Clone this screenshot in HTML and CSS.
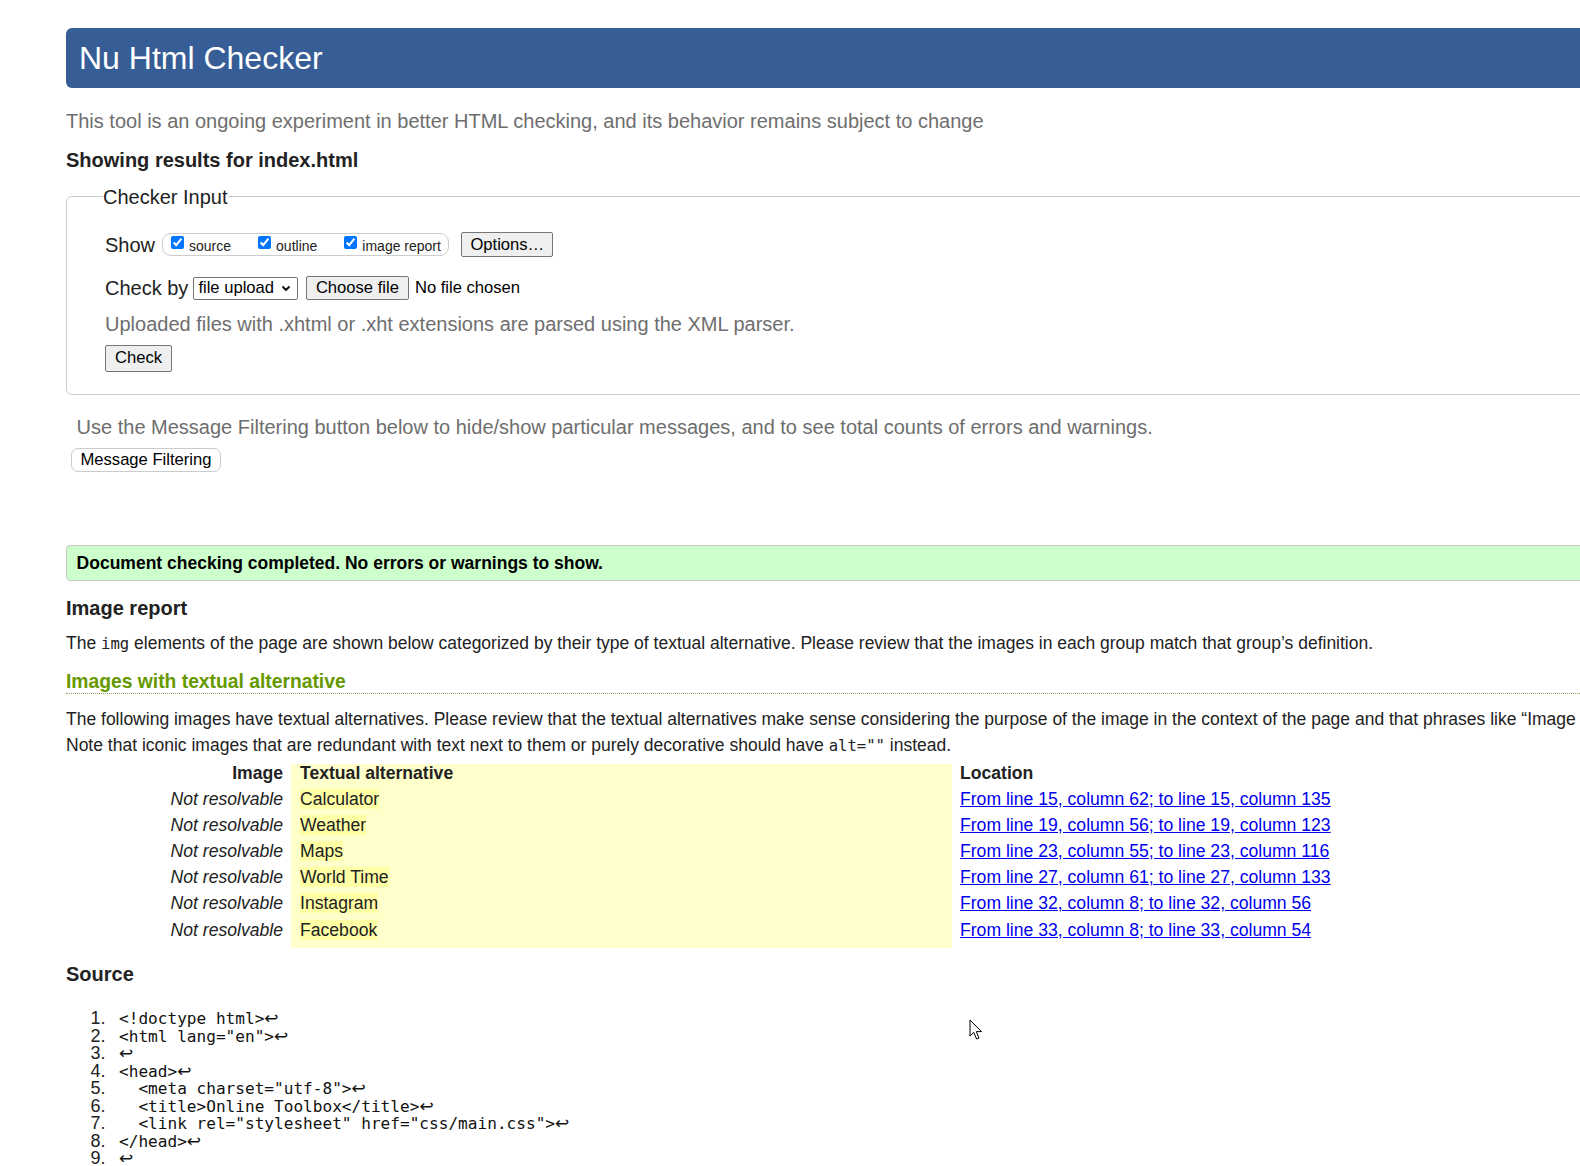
FILE: index.html
```html
<!DOCTYPE html>
<html lang="en">
<head>
<meta charset="utf-8">
<title>Nu Html Checker</title>
<link rel="stylesheet" href="styles.css">
</head>
<body>
<div class="page">
  <h1 class="banner">Nu Html Checker</h1>
  <p class="intro">This tool is an ongoing experiment in better HTML checking, and its behavior remains subject to change</p>
  <h2 class="results">Showing results for index.html</h2>
  <fieldset class="input">
    <legend>Checker Input</legend>
    <div class="row show-row">
      <span class="label">Show</span>
      <span class="opts">
        <label class="opt"><input type="checkbox" checked>source</label>
        <label class="opt"><input type="checkbox" checked>outline</label>
        <label class="opt"><input type="checkbox" checked>image report</label>
      </span>
      <button class="btn options">Options…</button>
    </div>
    <div class="row by-row">
      <span class="label">Check by</span>
      <span class="select">file upload<svg class="chev" width="10" height="7" viewBox="0 0 10 7"><path d="M1.5 1.5 L5 5 L8.5 1.5" fill="none" stroke="#000" stroke-width="1.8"/></svg></span>
      <button class="btn choose">Choose file</button>
      <span class="nofile">No file chosen</span>
    </div>
    <p class="note">Uploaded files with .xhtml or .xht extensions are parsed using the XML parser.</p>
    <button class="btn check">Check</button>
  </fieldset>
  <p class="filter-note">Use the Message Filtering button below to hide/show particular messages, and to see total counts of errors and warnings.</p>
  <button class="filter-btn">Message Filtering</button>
  <div class="success">Document checking completed. No errors or warnings to show.</div>
  <h2 class="section">Image report</h2>
  <p class="text">The <code>img</code> elements of the page are shown below categorized by their type of textual alternative. Please review that the images in each group match that group’s definition.</p>
  <h3 class="green">Images with textual alternative</h3>
  <p class="text two">The following images have textual alternatives. Please review that the textual alternatives make sense considering the purpose of the image in the context of the page and that phrases like “Image of” are not used.<br>Note that iconic images that are redundant with text next to them or purely decorative should have <code>alt=""</code> instead.</p>
  <table class="imgs">
    <thead>
      <tr><th class="c1">Image</th><th class="c2">Textual alternative</th><th class="c3">Location</th></tr>
    </thead>
    <tbody>
      <tr><td class="c1">Not resolvable</td><td class="c2"><span class="alt">Calculator</span></td><td class="c3"><a href="#">From line 15, column 62; to line 15, column 135</a></td></tr>
      <tr><td class="c1">Not resolvable</td><td class="c2"><span class="alt">Weather</span></td><td class="c3"><a href="#">From line 19, column 56; to line 19, column 123</a></td></tr>
      <tr><td class="c1">Not resolvable</td><td class="c2"><span class="alt">Maps</span></td><td class="c3"><a href="#">From line 23, column 55; to line 23, column 116</a></td></tr>
      <tr><td class="c1">Not resolvable</td><td class="c2"><span class="alt">World Time</span></td><td class="c3"><a href="#">From line 27, column 61; to line 27, column 133</a></td></tr>
      <tr><td class="c1">Not resolvable</td><td class="c2"><span class="alt">Instagram</span></td><td class="c3"><a href="#">From line 32, column 8; to line 32, column 56</a></td></tr>
      <tr class="last"><td class="c1">Not resolvable</td><td class="c2"><span class="alt">Facebook</span></td><td class="c3"><a href="#">From line 33, column 8; to line 33, column 54</a></td></tr>
    </tbody>
  </table>
  <h2 class="section source-h">Source</h2>
  <ol class="source">
    <li><code>&lt;!doctype html&gt;<span class="ret">↩</span></code></li>
    <li><code>&lt;html lang="en"&gt;<span class="ret">↩</span></code></li>
    <li><code><span class="ret">↩</span></code></li>
    <li><code>&lt;head&gt;<span class="ret">↩</span></code></li>
    <li><code>  &lt;meta charset="utf-8"&gt;<span class="ret">↩</span></code></li>
    <li><code>  &lt;title&gt;Online Toolbox&lt;/title&gt;<span class="ret">↩</span></code></li>
    <li><code>  &lt;link rel="stylesheet" href="css/main.css"&gt;<span class="ret">↩</span></code></li>
    <li><code>&lt;/head&gt;<span class="ret">↩</span></code></li>
    <li><code><span class="ret">↩</span></code></li>
  </ol>
  <svg class="cursor" width="14" height="22" viewBox="0 0 14 22"><path d="M1 1 L1 17 L4.8 13.4 L7.6 20 L10 19 L7.3 12.6 L12.5 12.6 Z" fill="#fff" stroke="#000" stroke-width="1" stroke-linejoin="round"/></svg>
</div>
</body>
</html>
```
FILE: styles.css
```css
html { overflow: hidden; }
body {
  margin: 0;
  font-family: "Liberation Sans", Arial, sans-serif;
  font-size: 17.6px;
  color: #222;
  background: #fff;
}
.page {
  position: relative;
  width: 2300px;
  padding: 28px 0 0 66px;
}
.banner {
  margin: 0;
  height: 60px;
  line-height: 61px;
  font-size: 32px;
  font-weight: normal;
  color: #fff;
  background: #365d95;
  padding-left: 13px;
  border-radius: 6px 0 0 6px;
}
.intro {
  margin: 21px 0 0;
  font-size: 20px;
  line-height: 24px;
  color: #6e6e6e;
}
.results {
  margin: 15px 0 0;
  font-size: 20px;
  line-height: 24px;
  font-weight: bold;
}
.input {
  margin: 12.5px 0 0;
  padding: 0 0 22px 38px;
  border: 1px solid #ccc;
  border-radius: 6px;
  min-width: 0;
}
.input legend {
  padding: 0;
  margin-left: -2px;
  font-size: 20px;
  line-height: 24px;
}
.row { display: flex; align-items: center; }
.label { font-size: 20px; line-height: 24px; }
.show-row { margin-top: 23.5px; height: 25px; }
.opts {
  display: flex;
  align-items: center;
  gap: 27px;
  height: 21px;
  margin-left: 7px;
  padding: 0 7px 0 8px;
  border: 1px solid #ccc;
  border-radius: 9px;
}
.opt {
  display: flex;
  align-items: center;
  font-size: 14px;
  line-height: 16px;
  padding-top: 2px;
}
.opt input {
  width: 13px;
  height: 13px;
  margin: 0 5px 6px 0;
  accent-color: #0075ff;
}
.btn {
  font-family: inherit;
  font-size: 16.6px;
  color: #000;
  background: #efefef;
  border: 1px solid #767676;
  border-radius: 2px;
  padding: 0 7.5px;
  height: 25px;
  line-height: 22px;
}
.options { margin-left: 12.5px; padding: 0 8px; }
.by-row { margin-top: 19px; height: 24px; }
.select {
  display: flex;
  align-items: center;
  justify-content: space-between;
  box-sizing: border-box;
  width: 104.5px;
  height: 23px;
  margin-left: 5px;
  padding: 0 6px 0 4px;
  border: 1px solid #767676;
  border-radius: 2px;
  background: #fff;
  color: #000;
  font-size: 16.6px;
}
.chev { display: block; }
.choose { margin-left: 8px; height: 24px; padding: 0 9px; }
.nofile { margin-left: 6px; color: #000; font-size: 16.6px; }
.note {
  margin: 11.5px 0 0;
  font-size: 20px;
  line-height: 24px;
  color: #6e6e6e;
}
.check {
  display: block;
  margin-top: 9px;
  height: 27.5px;
  padding: 0 9px;
}
.filter-note {
  margin: 20px 0 0 10.6px;
  font-size: 20px;
  line-height: 24px;
  color: #6e6e6e;
}
.filter-btn {
  display: block;
  margin: 9.4px 0 0 4.5px;
  height: 24px;
  padding: 0 9px;
  font-family: inherit;
  font-size: 16.6px;
  color: #000;
  background: #fff;
  border: 1px solid #ccc;
  border-radius: 7px;
}
.success {
  margin-top: 72.4px;
  height: 34.5px;
  line-height: 34.5px;
  padding-left: 9.6px;
  background: #ccffcc;
  border: 1px solid #c6c6c6;
  border-radius: 4px;
  font-size: 17.5px;
  font-weight: bold;
  color: #000;
}
.section {
  margin: 15px 0 0;
  font-size: 20px;
  line-height: 24px;
  font-weight: bold;
}
.text {
  margin: 9.4px 0 0;
  font-size: 17.5px;
  line-height: 26px;
}
.text.two { margin-top: 12px; line-height: 26.2px; }
code {
  font-family: "DejaVu Sans Mono", "Liberation Mono", monospace;
  font-size: 15.6px;
}
.green {
  margin: 13.5px 0 0;
  font-size: 19.3px;
  line-height: 23px;
  font-weight: bold;
  color: #669900;
  border-bottom: 1px dotted #999966;
}
.imgs {
  margin-top: 4px;
  border-collapse: collapse;
  border-spacing: 0;
}
.imgs th, .imgs td {
  padding: 4px 0;
  line-height: 18.2px;
  vertical-align: top;
  white-space: nowrap;
}
.imgs th { padding-top: 0; line-height: 18px; text-align: left; }
.imgs .c1 { width: 217px; padding-right: 8px; text-align: right; }
.imgs td.c1 { font-style: italic; }
.imgs .c2 { width: 643px; padding-left: 9px; padding-right: 9px; background: #ffffcc; }
.imgs .c3 { padding-left: 8px; }
.imgs .last td { padding-bottom: 9px; }
.alt { background: #ffffa6; }
.imgs a { color: #0000ee; text-decoration: underline; }
.source-h { margin-top: 14.5px; }
.source {
  margin: 24px 0 0;
  padding-left: 53px;
}
.source li { line-height: 17.5px; }
.source li::marker {
  content: counter(list-item) ".\00a0\00a0\2009";
  font-size: 18px;
}
.source code {
  font-size: 16.1px;
  white-space: pre;
  color: #111;
}
.ret {
  font-family: "DejaVu Sans", sans-serif;
  font-size: 17px;
}
.cursor {
  position: absolute;
  left: 969px;
  top: 1019px;
}
```
